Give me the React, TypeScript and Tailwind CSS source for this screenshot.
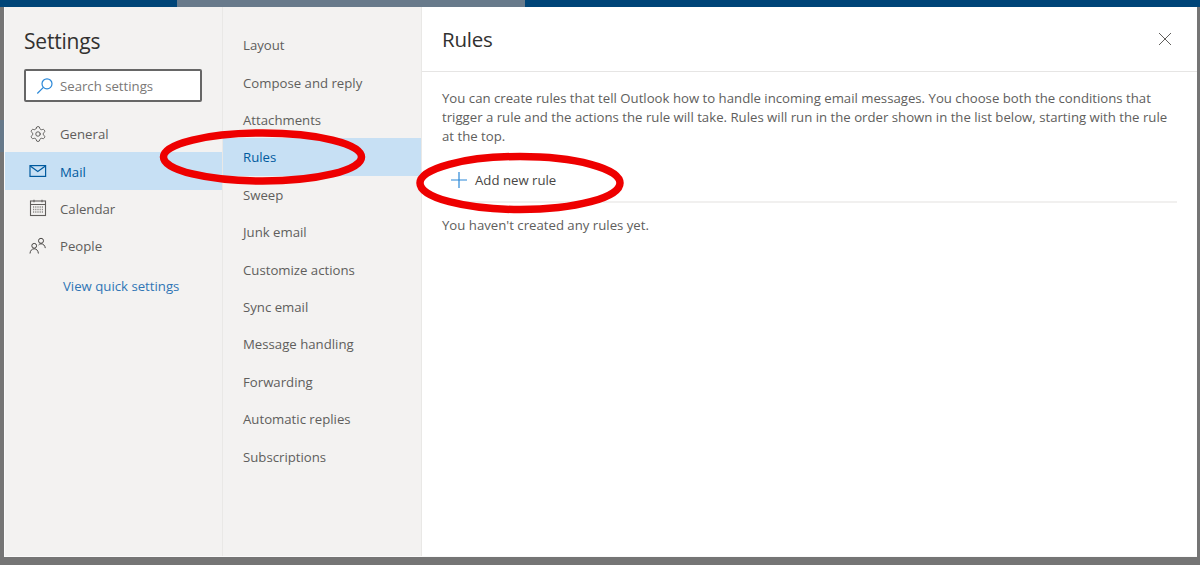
import React from 'react';
import { Settings as Gear } from 'lucide-react';

const generalNav = ['General', 'Mail', 'Calendar', 'People'];

const mailNav = [
  'Layout',
  'Compose and reply',
  'Attachments',
  'Rules',
  'Sweep',
  'Junk email',
  'Customize actions',
  'Sync email',
  'Message handling',
  'Forwarding',
  'Automatic replies',
  'Subscriptions',
];

const MailIcon = () => (
  <svg width="18" height="14" viewBox="0 0 18 14" fill="none" stroke="#005a9e" strokeWidth="1.2">
    <rect x="1" y="1.6" width="15.6" height="10.8" />
    <path d="M1.2 2l7.6 5.6L16.4 2" />
  </svg>
);

const CalendarIcon = () => (
  <svg width="18" height="18" viewBox="0 0 18 18" fill="none" stroke="#605e5c" strokeWidth="1.1">
    <rect x="1.5" y="2" width="15" height="14.5" />
    <path d="M1.5 5.5h15M5 .8v2.4M13 .8v2.4" />
    <path d="M4 8h10M4 10.5h10M4 13h10" strokeDasharray="1.2 1" strokeWidth="1.4" stroke="#8a8886" />
  </svg>
);

const PeopleIcon = () => (
  <svg width="18" height="18" viewBox="0 0 18 18" fill="none" stroke="#484644" strokeWidth="1">
    <circle cx="12" cy="3.8" r="2.5" />
    <circle cx="5.2" cy="8.8" r="2.4" />
    <path d="M1 16.5c.2-2.8 1.8-4.7 4.2-4.7s4 1.9 4.2 4.7" />
    <path d="M9.6 8c.6-.8 1.4-1.2 2.4-1.2 2.3 0 4 1.7 4.3 4.3" />
  </svg>
);

const SearchIcon = () => (
  <svg width="18" height="18" viewBox="0 0 18 18" fill="none" stroke="#2b88d8" strokeWidth="1.2">
    <circle cx="11" cy="6.8" r="5" />
    <path d="M7.4 10.4L1.3 16.5" />
  </svg>
);

const navIcon = (name: string) => {
  if (name === 'General') return <Gear size={18} strokeWidth={1.1} color="#484644" />;
  if (name === 'Mail') return <MailIcon />;
  if (name === 'Calendar') return <CalendarIcon />;
  return <PeopleIcon />;
};

export default function App() {
  return (
    <div className="relative flex h-[565px] w-[1200px] flex-col overflow-hidden bg-[#757575] font-['Open_Sans','Noto_Sans',sans-serif]">
      {/* page behind the dialog */}
      <div className="flex h-[7px] shrink-0">
        <div className="w-[177px] bg-[#004578]" />
        <div className="w-[348px] bg-[#687a8b]" />
        <div className="flex-1 bg-[#004578]" />
      </div>

      <div className="flex h-[550px] shrink-0">
        <div className="flex w-1 shrink-0 flex-col pt-[113px]">
          <div className="h-[32px] bg-[#66798a]" />
        </div>
        <div className="flex w-[1193px] shrink-0 border-b border-l border-[#fafafa] bg-white">
          {/* left column */}
          <div className="flex w-[217px] shrink-0 flex-col bg-[#f3f2f1]">
            <h1 className="pl-[19px] pt-[18px] text-[21px] leading-[33px] font-medium tracking-[-0.2px] text-[#323130]">
              Settings
            </h1>
            <div className="ml-[19px] mt-[11px] flex h-[33px] w-[178px] items-center gap-[6px] rounded-[2px] border-2 border-[#666666] bg-white pl-[10px]">
              <SearchIcon />
              <span className="pt-[2px] text-[13.2px] text-[#7a7876]">Search settings</span>
            </div>
            <div className="mt-[13px] flex flex-col">
              {generalNav.map((name) => (
                <div
                  key={name}
                  className={
                    name === 'Mail'
                      ? 'flex h-[37.4px] items-center bg-[#c7e0f4] pl-[24px] text-[13.2px] font-medium text-[#005a9e]'
                      : 'flex h-[37.4px] items-center pl-[24px] text-[13.2px] text-[#605e5c]'
                  }
                >
                  <span className="flex w-[31px] shrink-0 items-center">{navIcon(name)}</span>
                  <span className="pt-[3px]">{name}</span>
                </div>
              ))}
            </div>
            <div className="mt-[11px] pl-[58px] text-[13.2px] leading-[20px] text-[#2f75b5]">View quick settings</div>
          </div>

          {/* second column */}
          <div className="flex w-[200px] shrink-0 flex-col border-x border-[#e9e8e6] bg-[#f3f2f1] pt-[19px]">
            {mailNav.map((name) => (
              <div
                key={name}
                className={
                  name === 'Rules'
                    ? 'flex h-[37.4px] items-center bg-[#c7e0f4] pl-5 text-[13.2px] font-medium text-[#005a9e]'
                    : 'flex h-[37.4px] items-center pl-5 text-[13.2px] text-[#605e5c]'
                }
              >
                <span className="pt-[3px]">{name}</span>
              </div>
            ))}
          </div>

          {/* rules pane */}
          <div className="flex min-w-0 flex-1 flex-col">
            <div className="flex h-[65px] shrink-0 items-center justify-between border-b border-[#e6e5e4] pl-5 pr-[25px]">
              <h2 className="pt-[1px] text-[20.5px] font-medium tracking-[-0.2px] text-[#323130]">Rules</h2>
              <svg width="14" height="14" viewBox="0 0 14 14" fill="none" stroke="#605e5c" strokeWidth="1">
                <path d="M1 1l12 12M13 1L1 13" />
              </svg>
            </div>
            <div className="pl-5 pr-[20px] pt-[17px]">
              <p className="text-[13.2px] leading-[19.2px] text-[#605e5c]">
                You can create rules that tell Outlook how to handle incoming email messages. You choose both the
                conditions that trigger a rule and the actions the rule will take. Rules will run in the order shown in
                the list below, starting with the rule at the top.
              </p>
              <div className="mt-[13px] flex h-[43px] items-center gap-2 border-b-2 border-[#f1f0ef] pl-[9px] text-[13.2px] text-[#484644]">
                <svg width="16" height="16" viewBox="0 0 16 16" fill="none" stroke="#2b88d8" strokeWidth="1.2">
                  <path d="M8 0v16M0 8h16" />
                </svg>
                <span className="pt-[2px]">Add new rule</span>
              </div>
              <p className="mt-[13px] text-[13.2px] leading-[19px] text-[#605e5c]">You haven't created any rules yet.</p>
            </div>
          </div>
        </div>
      </div>

      {/* hand-drawn red marks over the screenshot */}
      <svg className="pointer-events-none absolute inset-0" width="1200" height="565" fill="none" stroke="#ee0000" strokeWidth="7.5">
        <ellipse cx="262.5" cy="157" rx="99" ry="24" />
        <ellipse cx="520" cy="183" rx="100" ry="26.5" />
      </svg>
    </div>
  );
}
